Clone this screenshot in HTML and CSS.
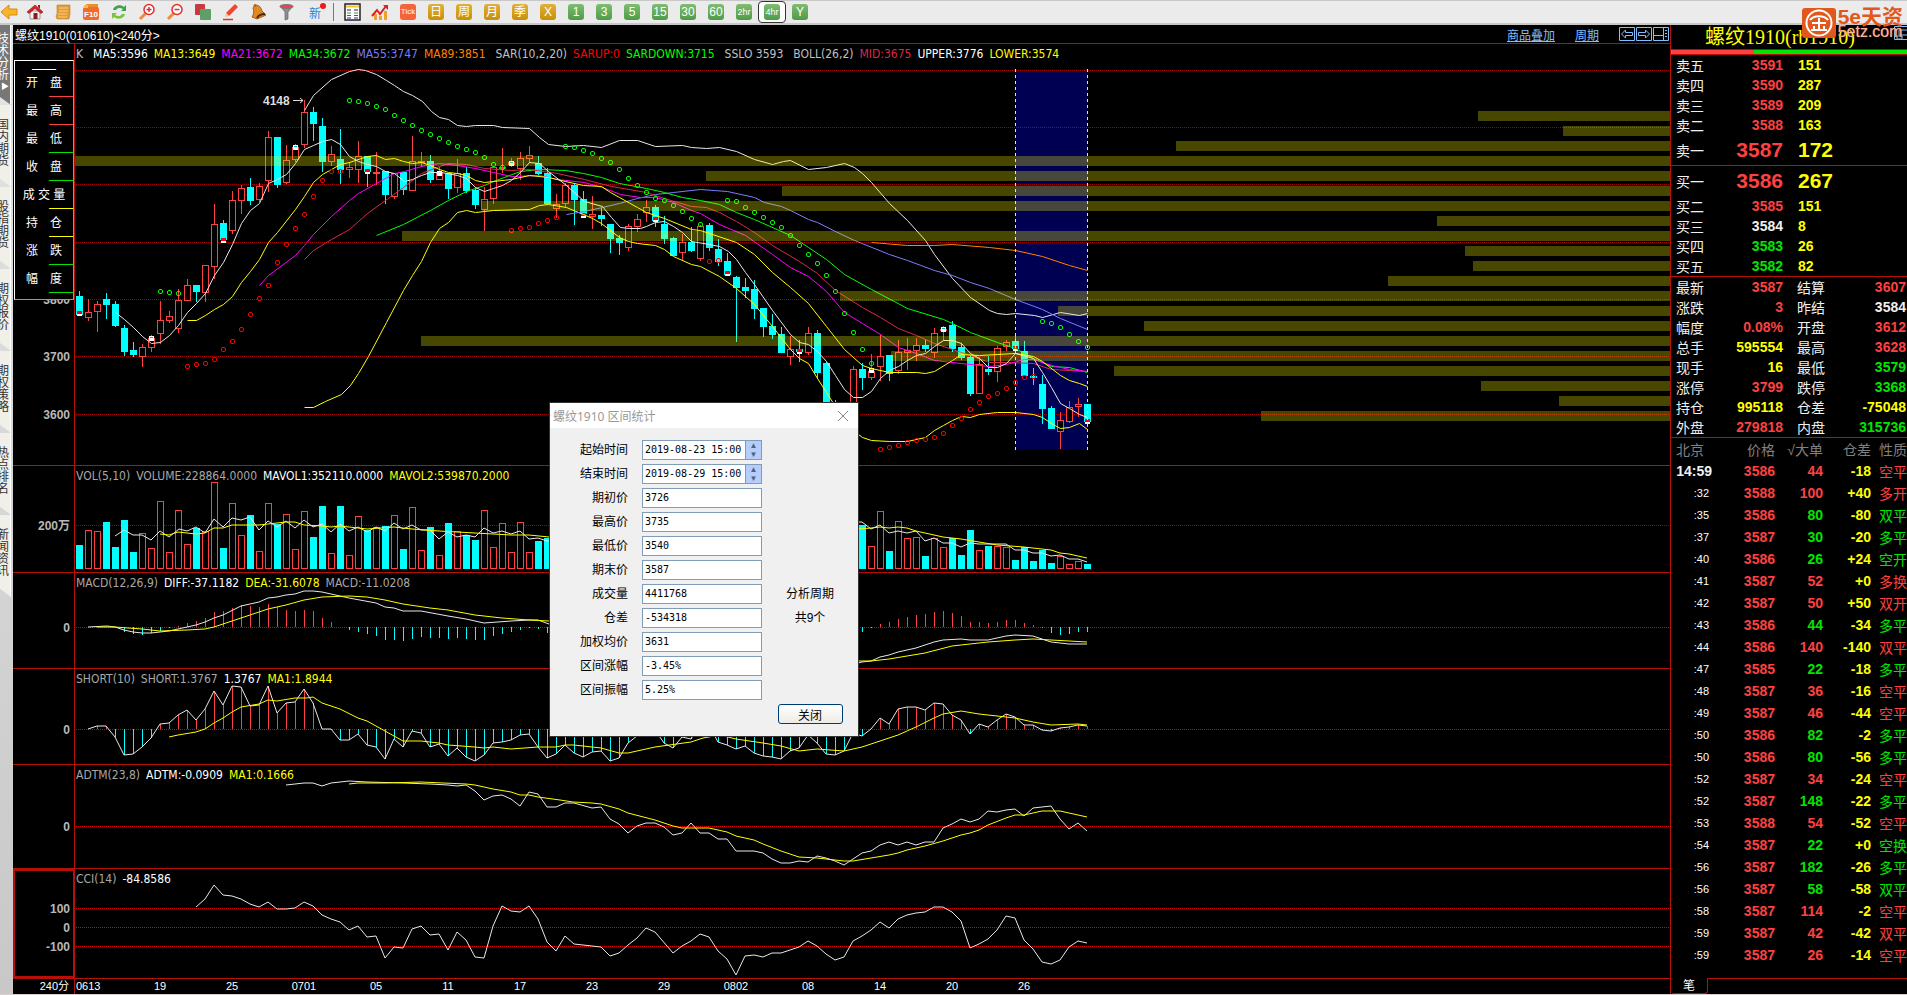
FILE: index.html
```html
<!DOCTYPE html>
<html lang="zh">
<head>
  <meta charset="UTF-8" />
  <meta name="viewport" content="width=device-width, initial-scale=1.0" />
  <title>螺纹1910(010610)</title>
  <link rel="stylesheet" href="styles.css">
</head>
<body>
  <header class="toolbar">
    <button class="tool" aria-label="后退"><svg width="18" height="18"><path d="M1 9L9 2v4h8v6H9v4z" fill="#f7b52c" stroke="#d98a10"/></svg></button>
    <button class="tool" aria-label="首页"><svg width="18" height="18"><path d="M4 8h10v8H4z" fill="#f2f2f2" stroke="#999"/><path d="M1 9L9 2l8 7-2 1.500-6-5-6 5z" fill="#d3222a" stroke="#9c1218" stroke-width=".6"/><path d="M12 2h2v4l-2-2z" fill="#b01820"/><path d="M7.500 10h4v6h-4z" fill="#8a1c1c"/></svg></button>
    <button class="tool" aria-label="资讯"><svg width="18" height="18"><path d="M3 2h13v9l-1 5H3l-1-3 1-2z" fill="#e39b35" stroke="#c67c18" stroke-width=".6"/><path d="M5 5h9M5 8h9M4 11h9M4 14h9" stroke="#f8cf8a"/></svg></button>
    <button class="tool" aria-label="F10"><svg width="18" height="18"><path d="M4 1h12v4H4z" fill="#e8902a"/><rect x="1" y="4" width="16" height="13" rx="2" fill="#f26a2c"/><path d="M2 2h4v3H2z" fill="#f3bb55"/><text x="9" y="14" class="f10">F10</text></svg></button>
    <button class="tool" aria-label="刷新"><svg width="18" height="18"><path d="M3 7c1-5 8-6 11-3l2-2v6h-5l2-2c-3-2-6-1-7 1z" fill="#3fa34d"/><path d="M15 11c-1 5-8 6-11 3l-2 2v-6h5l-2 2c3 2 6 1 7-1z" fill="#7cc242"/></svg></button>
    <button class="tool" aria-label="放大"><svg width="18" height="18"><path d="M2 16l6-6" stroke="#f08a35" stroke-width="3"/><circle cx="11" cy="6.500" r="5" fill="#fff" stroke="#e2312d" stroke-width="1.500"/><path d="M8.500 6.500h5M11 4v5" stroke="#e2312d" stroke-width="1.500"/></svg></button>
    <button class="tool" aria-label="缩小"><svg width="18" height="18"><path d="M2 16l6-6" stroke="#f08a35" stroke-width="3"/><circle cx="11" cy="6.500" r="5" fill="#fff" stroke="#e2312d" stroke-width="1.500"/><path d="M8.500 6.500h5" stroke="#e2312d" stroke-width="1.500"/></svg></button>
    <button class="tool" aria-label="叠加"><svg width="18" height="18"><rect x="1" y="1" width="10" height="11" rx="1" fill="#c9393d"/><rect x="6" y="6" width="11" height="11" rx="1" fill="#5d9f67"/></svg></button>
    <button class="tool" aria-label="画线"><svg width="18" height="18"><path d="M4 10L13 1l3 3-9 9z" fill="#f0452f"/><path d="M4 10l3 3-4 1z" fill="#f5c08a"/><path d="M1 16.500h10" stroke="#e2312d" stroke-width="1.500"/></svg></button>
    <button class="tool" aria-label="预警"><svg width="18" height="18"><path d="M5 2c4 0 6 2 7 6l4 4-9 4-5-2c2-3 2-6 1-9z" fill="#e08a24" stroke="#8a4a10" stroke-width=".8"/><path d="M7 15c2-4 5-4 8-4" stroke="#53280a" stroke-width="2" fill="none"/><circle cx="5" cy="2.500" r="1.500" fill="#b56414"/></svg></button>
    <button class="tool" aria-label="筛选"><svg width="18" height="18"><path d="M2 3h13l-5 6v7l-3 1V9z" fill="#8e8e93" stroke="#55555a" stroke-width=".6"/><ellipse cx="8.500" cy="3.500" rx="6.500" ry="2" fill="#e8454a" stroke="#777"/></svg></button>
    <button class="tool new">新<i></i></button>
    <span class="separator"></span>
    <button class="tool" aria-label="报价表"><svg width="18" height="18"><rect x="2" y="1" width="15" height="16" fill="#fff" stroke="#222" stroke-width="1.500"/><path d="M3 3.500h13" stroke="#f2c230" stroke-width="2"/><path d="M4 7h4M11 7h4" stroke="#222"/><path d="M4 10h4M11 10h4" stroke="#2c9c3c"/><path d="M4 12.500h4M11 12.500h4" stroke="#d22"/><path d="M4 15h4M11 15h4" stroke="#22a"/></svg></button>
    <button class="tool" aria-label="走势图"><svg width="18" height="18"><path d="M3 11v6h3v-6zM8 13v4h3v-4zM13 8v9h3V8z" fill="#f0a02c"/><path d="M1 13l5-6 3 4 6-8" stroke="#e02020" stroke-width="2" fill="none"/><path d="M12 2h5v5z" fill="#e02020"/></svg></button>
    <button class="tool"><span class="badge tick">Tick</span></button>
    <button class="tool"><span class="badge">日</span></button>
    <button class="tool"><span class="badge">周</span></button>
    <button class="tool"><span class="badge">月</span></button>
    <button class="tool"><span class="badge">季</span></button>
    <button class="tool"><span class="badge">X</span></button>
    <button class="tool"><span class="badge green">1</span></button>
    <button class="tool"><span class="badge green">3</span></button>
    <button class="tool"><span class="badge green">5</span></button>
    <button class="tool"><span class="badge green">15</span></button>
    <button class="tool"><span class="badge green">30</span></button>
    <button class="tool"><span class="badge green">60</span></button>
    <button class="tool"><span class="badge green small">2hr</span></button>
    <button class="tool selected"><span class="badge green small">4hr</span></button>
    <button class="tool"><span class="badge green">Y</span></button>
  </header>

  <div class="main">
    <nav class="side-tabs">
      <button class="side-tab active"><span>技术分析</span><b>▶</b></button>
      <button class="side-tab"><span>国内期货</span></button>
      <button class="side-tab"><span>股指期货</span></button>
      <button class="side-tab"><span>期权报价</span></button>
      <button class="side-tab"><span>期权策略</span></button>
      <button class="side-tab"><span>热点排名</span></button>
      <button class="side-tab"><span>新闻资讯</span></button>
    </nav>

    <main class="charts">
      <div class="chart-head">
        <span class="contract">螺纹1910(010610)&lt;240分&gt;</span>
        <a href="#">商品叠加</a>
        <a href="#">周期</a>
        <div class="head-icons">
          <button aria-label="上一个"><svg width="16" height="14"><path d="M.5.5h15v13H.5zM2.500 7l4-4v2.500h7v3h-7V11z"/></svg></button>
          <button aria-label="下一个"><svg width="16" height="14"><path d="M.5.5h15v13H.5zM13.500 7l-4-4v2.500h-7v3h7V11z"/></svg></button>
          <button aria-label="布局"><svg width="16" height="14"><path d="M.5.5h15v13H.5zM10.500.5v13M.5 8.500h10M12 3.500h2M12 6.500h2M12 9.500h2"/></svg></button>
        </div>
      </div>

      <section class="panel panel-k">
        <svg id="k"></svg>
        <div class="title title-k">
          <span class="key">K</span><span>MA5:3596</span><span class="yellow">MA13:3649</span><span class="magenta">MA21:3672</span><span class="lime">MA34:3672</span><span class="violet">MA55:3747</span><span class="orange">MA89:3851</span><span class="silver group">SAR(10,2,20)</span><span class="red">SARUP:0</span><span class="lime">SARDOWN:3715</span><span class="silver group">SSLO 3593</span><span class="silver group">BOLL(26,2)</span><span class="crimson">MID:3675</span><span>UPPER:3776</span><span class="yellow">LOWER:3574</span>
        </div>
        <ul class="info-box">
          <li class="first">——</li>
          <li><span>开　盘</span><i class="up">——</i></li>
          <li><span>最　高</span><i class="up">——</i></li>
          <li><span>最　低</span><i class="down">——</i></li>
          <li><span>收　盘</span><i class="down">——</i></li>
          <li><span>成 交 量</span><i class="yellow">——</i></li>
          <li><span>持　仓</span><i class="yellow">——</i></li>
          <li><span>涨　跌</span><i class="down">——</i></li>
          <li><span>幅　度</span><i class="down">——</i></li>
        </ul>
      </section>
      <section class="panel panel-vol">
        <svg id="vol"></svg>
        <div class="title"><span class="gray">VOL(5,10)</span><span class="gray">VOLUME:228864.0000</span><span>MAVOL1:352110.0000</span><span class="yellow">MAVOL2:539870.2000</span></div>
      </section>
      <section class="panel panel-macd">
        <svg id="macd"></svg>
        <div class="title"><span class="gray">MACD(12,26,9)</span><span>DIFF:-37.1182</span><span class="yellow">DEA:-31.6078</span><span class="gray">MACD:-11.0208</span></div>
      </section>
      <section class="panel panel-short">
        <svg id="short"></svg>
        <div class="title"><span class="gray">SHORT(10)</span><span class="gray">SHORT:1.3767</span><span>1.3767</span><span class="yellow">MA1:1.8944</span></div>
      </section>
      <section class="panel panel-adtm">
        <svg id="adtm"></svg>
        <div class="title"><span class="gray">ADTM(23,8)</span><span>ADTM:-0.0909</span><span class="yellow">MA1:0.1666</span></div>
      </section>
      <section class="panel panel-cci">
        <svg id="cci"></svg>
        <div class="title"><span class="gray">CCI(14)</span><span>-84.8586</span></div>
      </section>
      <div class="time-axis">
        <span class="period">240分</span><span class="start">0613</span><span>19</span><span>25</span><span>0701</span><span>05</span><span>11</span><span>17</span><span>23</span><span>29</span><span>0802</span><span>08</span><span>14</span><span>20</span><span>26</span>
      </div>
    </main>

    <aside class="quote">
      <h1>螺纹1910(rb1910)</h1>
      <div class="ratio"><i></i></div>
      <table class="depth" id="asks"></table>
      <table class="depth" id="bids"></table>
      <table class="stats" id="stats"></table>
      <table class="ticks">
        <thead><tr><th>北京</th><th>价格</th><th>√大单</th><th>仓差</th><th>性质</th></tr></thead>
        <tbody id="ticks"></tbody>
      </table>
      <div class="quote-foot"><button>笔</button></div>
    </aside>
  </div>

  <svg class="dock" width="14" height="14"><path d="M.5.500h13v13H.5zM3 10h5v3H3zM5 4h9v5H5z"/></svg>
  <div class="logo">
    <svg width="34" height="30"><rect width="34" height="30" rx="3" fill="#e2581c"/><circle cx="17" cy="15" r="12.500" fill="none" stroke="#fff" stroke-width="2"/><path d="M8 12c4-5 14-5 18 0M10 15h14M17 10v12M9 22h16M12 18v4M22 18v4" fill="none" stroke="#fff" stroke-width="2"/></svg>
    <div><strong>5e天资</strong><em>5etz.com</em></div>
  </div>

  <form class="dialog" id="dialog">
    <div class="dialog-title"><span>螺纹1910 区间统计</span><button type="button" aria-label="关闭窗口"><svg width="12" height="12"><path d="M1 1l10 10M11 1L1 11"/></svg></button></div>
    <div class="dialog-body">
      <label for="begin">起始时间</label>
      <div class="spin"><input id="begin" value="2019-08-23 15:00"><span><button type="button" aria-label="增加">▲</button><button type="button" aria-label="减少">▼</button></span></div>
      <label for="end">结束时间</label>
      <div class="spin"><input id="end" value="2019-08-29 15:00"><span><button type="button" aria-label="增加">▲</button><button type="button" aria-label="减少">▼</button></span></div>
      <label for="open">期初价</label><input id="open" value="3726">
      <label for="high">最高价</label><input id="high" value="3735">
      <label for="low">最低价</label><input id="low" value="3540">
      <label for="close">期末价</label><input id="close" value="3587">
      <label for="volume">成交量</label><input id="volume" value="4411768"><span class="note">分析周期</span>
      <label for="diff">仓差</label><input id="diff" value="-534318"><span class="note">共9个</span>
      <label for="avg">加权均价</label><input id="avg" value="3631">
      <label for="chg">区间涨幅</label><input id="chg" value="-3.45%">
      <label for="amp">区间振幅</label><input id="amp" value="5.25%">
      <button type="button" class="close">关闭</button>
    </div>
  </form>

  <script src="chart.js"></script>
</body>
</html>
```
FILE: styles.css
```css
*, *::before {
  box-sizing: border-box;
}
body {
  margin: 0;
  height: 100vh;
  display: flex;
  flex-direction: column;
  overflow: hidden;
  background: #d8d0d0;
  color: #fff;
  font-family: 'Liberation Sans', 'Noto Sans CJK SC', sans-serif;
  font-size: 12px;
}
button {
  border: 0;
  padding: 0;
  background: none;
  color: inherit;
  font: inherit;
}
svg {
  display: block;
}

/* 颜色 */
.yellow { color: #ff0; }
.magenta { color: #f0f; }
.lime { color: #0f0; }
.violet { color: #7c7cff; }
.orange { color: #ff8000; }
.silver { color: #c0c0c0; }
.gray { color: #a8a8a8; }
.crimson { color: #dc2848; }
.red { color: #f00; }
.up { color: #ff4040; }
.down { color: #00e600; }
.white { color: #f0f0f0; }

/* 工具栏 */
.toolbar {
  display: flex;
  align-items: center;
  flex: none;
  height: 25px;
  padding-right: 8px;
  background: #ebebeb;
  border-top: 1px solid #c8c8c8;
  border-bottom: 2px solid #c8c8c8;
}
.tool {
  display: flex;
  align-items: center;
  justify-content: center;
  flex: none;
  width: 28px;
  height: 22px;
}
.tool:first-child {
  justify-content: flex-start;
  width: 21px;
}
.tool.selected {
  background: #fff;
  border: 1px solid #333;
  border-radius: 4px;
}
.f10 {
  fill: #fff;
  font-size: 8px;
  font-weight: bold;
  text-anchor: middle;
}
.new {
  position: relative;
  color: #2f7fd6;
  font-size: 12px;
}
.new i {
  position: absolute;
  top: 2px;
  right: 3px;
  width: 6px;
  height: 6px;
  border-radius: 50%;
  background: #f01818;
}
.separator {
  width: 1px;
  height: 18px;
  margin: 0 4px;
  background: #777;
}
.badge {
  width: 16px;
  height: 16px;
  border-radius: 3px;
  background: linear-gradient(#e0b03c, #c88f08);
  color: #fff;
  font-size: 12px;
  line-height: 16px;
  text-align: center;
}
.badge.green {
  background: linear-gradient(#7fbd72, #4f9b45);
}
.badge.tick {
  background: #f4633a;
  font-size: 8px;
}
.badge.small {
  font-size: 9px;
}

.main {
  display: flex;
  flex: 1;
  min-height: 0;
  margin-bottom: 1px;
}

/* 左侧标签 */
.side-tabs {
  flex: none;
  width: 13px;
  overflow: hidden;
  background: linear-gradient(#e4e4e4, #c8c8c8);
}
.side-tab {
  display: flex;
  flex-direction: column;
  justify-content: flex-start;
  width: 11px;
  height: 82px;
  padding-top: 14px;
  background: #f0efe8;
  border-right: 1px solid #fff;
  color: #333;
  font-size: 12px;
  line-height: 12px;
  clip-path: polygon(0 0, 100% 0, 100% 100%, 0 90%);
}
.side-tab span {
  width: 12px;
  margin-left: -3px;
  overflow-wrap: anywhere;
}
.side-tab.active {
  height: 80px;
  padding-top: 8px;
  background: #777;
  color: #fff;
}
.side-tab b {
  font-size: 8px;
}

/* 图表区 */
.charts {
  display: flex;
  flex-direction: column;
  flex: 1;
  min-width: 0;
  background: #000;
}
.chart-head {
  display: flex;
  align-items: center;
  height: 19px;
  padding: 0 1px 0 2px;
  border-bottom: 1px solid #b81008;
}
.contract {
  flex: 1;
}
.chart-head a {
  margin-right: 20px;
  color: #7fbfff;
}
.head-icons {
  display: flex;
  gap: 1px;
}
.head-icons path, .dock path {
  fill: none;
  stroke: #7fbfff;
}
.panel {
  position: relative;
  border-bottom: 1px solid #b81008;
}
.panel svg {
  width: 100%;
  height: 100%;
}
.panel-k { height: 422px; }
.panel-vol { height: 107px; }
.panel-macd { height: 96px; }
.panel-short { height: 96px; }
.panel-adtm { height: 104px; }
.panel-cci { height: 110px; }
.panel-cci::before {
  content: '';
  position: absolute;
  top: 0;
  left: 0;
  width: 62px;
  height: 100%;
  border: 2px solid #b81008;
}
.title {
  position: absolute;
  top: 0;
  left: 63px;
  display: flex;
  gap: 6px;
  font-family: 'DejaVu Sans Condensed', 'DejaVu Sans', sans-serif;
  font-size: 12px;
  line-height: 20px;
  white-space: nowrap;
}
.key {
  margin-right: 4px;
  color: #c0c0c0;
}
.group {
  margin-left: 4px;
}
.info-box {
  position: absolute;
  top: 16px;
  left: 1px;
  width: 60px;
  margin: 0;
  padding: 0;
  list-style: none;
  background: #000;
  border: 1px solid #fff;
  border-right-color: #999;
  border-bottom-color: #999;
}
.info-box li {
  height: 28px;
}
.info-box .first {
  height: 14px;
  text-align: center;
  line-height: 16px;
}
.info-box span {
  display: block;
  text-align: center;
  line-height: 17px;
  white-space: pre;
}
.info-box i {
  display: block;
  font-style: normal;
  line-height: 8px;
  text-align: right;
}

.axis-label {
  fill: #b8b8b8;
  font-size: 12px;
  font-weight: bold;
  text-anchor: end;
}
.peak {
  fill: #ddd;
  font-size: 12px;
  font-weight: bold;
}
.time-axis {
  display: flex;
  flex: 1;
  font-size: 11px;
  line-height: 15px;
  overflow: hidden;
}
.time-axis span {
  width: 72px;
  text-align: center;
}
.time-axis .period {
  width: 62px;
  padding-right: 5px;
  border-right: 1px solid #b81008;
  text-align: right;
}
.time-axis .start {
  width: 49px;
  padding-left: 1px;
  text-align: left;
}

/* 右侧报价 */
.quote {
  display: flex;
  flex-direction: column;
  flex: none;
  width: 237px;
  background: #000;
  border-left: 1px solid #b81008;
  overflow: hidden;
}
.quote h1 {
  height: 24px;
  margin: 0 0 0 34px;
  color: #ff0;
  font-family: 'Liberation Serif', 'Noto Sans CJK SC', serif;
  font-size: 20px;
  font-weight: normal;
  line-height: 24px;
}
.ratio {
  height: 6px;
  padding-left: 1px;
  border: solid #b81008;
  border-width: 1px 0;
  background: #00e600;
}
.ratio i {
  display: block;
  width: 35%;
  height: 4px;
  background: #ff4040;
}
.quote table {
  width: 100%;
  table-layout: fixed;
  border-collapse: collapse;
}
.quote th, .quote td {
  padding: 0;
  white-space: nowrap;
}
.quote th {
  color: #f0f0f0;
  font-size: 14px;
  font-weight: normal;
  text-align: left;
}
.quote td {
  font-size: 14px;
  font-weight: bold;
  text-align: right;
}
.depth, .stats {
  border-bottom: 1px solid #b81008;
}
.depth tr, .stats tr {
  height: 20px;
}
.depth tr.best {
  height: 30px;
}
.depth tr.best td {
  font-size: 21px;
}
.depth th:first-child, .stats th:first-child {
  width: 50px;
  padding-left: 5px;
}
.depth td:nth-child(2), .stats td:nth-child(2) {
  width: 62px;
}
.depth td:last-child {
  padding-left: 15px;
  color: #ff0;
  text-align: left;
}
.stats th:nth-child(3) {
  width: 50px;
  padding-left: 14px;
}
.stats td:last-child {
  padding-right: 1px;
}
.ticks tr {
  height: 22px;
}
.ticks th {
  color: #808080;
  text-align: right;
}
.ticks th:first-child {
  width: 41px;
  padding-left: 5px;
  text-align: left;
}
.ticks th:nth-child(2) { width: 63px; }
.ticks th:nth-child(3) { width: 48px; }
.ticks th:nth-child(4) { width: 48px; }
.ticks th:last-child, .ticks td:last-child {
  padding-left: 8px;
  font-weight: normal;
  text-align: left;
}
.ticks td.sec {
  padding-right: 3px;
  font-size: 11px;
  font-weight: normal;
}
.quote-foot {
  display: flex;
  flex: 1;
  align-items: flex-end;
}
.quote-foot button {
  width: 37px;
  height: 16px;
  border: solid #b81008;
  border-width: 0 1px 1px 0;
  border-radius: 0 0 3px 3px;
  line-height: 14px;
}
.quote-foot::after {
  content: '';
  flex: 1;
  height: 15px;
  border-top: 1px solid #b81008;
}

.dock {
  position: absolute;
  top: 26px;
  right: -1px;
}
.logo {
  position: absolute;
  top: 8px;
  right: 4px;
  display: flex;
  gap: 2px;
  color: #e2581c;
}
.logo strong {
  display: block;
  height: 17px;
  font-size: 21px;
  line-height: 17px;
}
.logo em {
  display: block;
  color: #f0b8a4;
  font-size: 16px;
  font-style: normal;
  line-height: 14px;
  text-shadow: 0 0 1px #e2581c;
}

/* 区间统计 */
.dialog {
  position: absolute;
  top: 402px;
  left: 549px;
  width: 310px;
  background: #f0f0f0;
  border: 1px solid #333;
  color: #000;
}
.dialog-title {
  display: flex;
  align-items: center;
  justify-content: space-between;
  height: 25px;
  padding: 0 9px 0 3px;
  background: #fff;
  color: #999;
  font-family: 'Noto Sans', 'Noto Sans CJK SC', sans-serif;
}
.dialog-title path {
  stroke: #888;
}
.dialog-body {
  display: grid;
  grid-template-columns: 78px 134px 1fr;
  grid-auto-rows: 20px;
  gap: 4px 0;
  padding: 12px 0;
}
.dialog label {
  grid-column: 1;
  line-height: 20px;
  text-align: right;
}
.dialog input {
  width: 120px;
  height: 20px;
  padding: 0 2px 2px;
  background: #fff;
  border: 1px solid #7f9db9;
  color: #000;
  font-family: 'DejaVu Sans Mono', monospace;
  font-size: 10px;
}
.dialog-body > input, .spin {
  grid-column: 2;
  margin-left: 14px;
}
.spin {
  display: flex;
  border: 1px solid #7f9db9;
  background: #b6cdfb;
}
.spin input {
  flex: 1;
  min-width: 0;
  height: 18px;
  border-width: 0 1px 0 0;
  padding-bottom: 1px;
}
.spin span {
  display: flex;
  flex-direction: column;
  width: 15px;
}
.spin button {
  flex: 1;
  color: #4d6185;
  font-size: 8px;
  line-height: 9px;
}
.note {
  grid-column: 3;
  line-height: 20px;
  text-align: center;
}
.dialog .close {
  grid-row: 12;
  grid-column: 3;
  justify-self: center;
  width: 65px;
  border: 1px solid #003c74;
  border-radius: 3px;
  background: linear-gradient(#fff, #ecebe5);
}
```
FILE: chart.js
```js
const RED = '#ff4040', CYAN = '#0ff', WHITE = '#e8e8e8', YELLOW = '#ff0', GREEN = '#0f0';
const LEFT = 13;    // 左侧标签宽度
const AXIS = 74;    // 纵轴位置

// 第 i 根K线的横坐标
const barX = i => 79 + 9 * i;

const rect = (x, y, w, h, fill) => `<rect x="${x}" y="${y}" width="${w}" height="${h}" fill="${fill}"/>`;
const line = (points, color) => `<polyline points="${points}" fill="none" stroke="${color}"/>`;
const grid = (y, color) => `<line x1="${AXIS + 2}" x2="110%" y1="${y}.5" y2="${y}.5" stroke="${color}" stroke-dasharray="1 1"/>`;
const label = (y, text) => `<text class="axis-label" x="70" y="${y + 5}">${text}</text>`;

function box(x, top, bottom, up) {
  const h = Math.max(bottom - top, 2);
  return up
    ? `<rect x="${x - 2.5}" y="${top + 0.5}" width="6" height="${h - 1}" fill="#000" stroke="${RED}"/>`
    : rect(x - 3, top, 7, h, CYAN);
}

function draw(id, top, html) {
  document.getElementById(id).innerHTML =
    `<g transform="translate(${-LEFT} ${-top})">${rect(AXIS, top, 1, 450, '#b81008')}${html}</g>`;
}

// 最高,实体上,实体下,最低,涨跌
const candles = `291,296,315,316,d 299,312,318,321,u 301,304,312,332,u 293,299,305,319,d 301,304,326,327,d
325,328,352,356,d 342,350,355,357,d 344,347,357,367,u 335,338,348,352,u 301,320,334,344,u
311,316,321,323,u 289,300,329,333,u 279,285,301,301,u 285,285,292,302,d 265,265,293,302,u
204,224,267,279,u 220,223,240,243,d 191,200,231,234,u 185,188,201,214,u 178,187,201,205,d
183,186,200,202,u 131,137,181,192,u 137,137,185,188,d 145,160,183,184,u 144,147,160,162,u
100,112,145,148,u 107,112,124,141,d 118,126,162,172,d 146,154,162,166,u 129,159,170,184,d
162,167,170,178,u 141,156,170,183,u 156,156,172,187,d 152,172,174,185,u 171,171,195,204,d
173,173,197,199,u 172,172,190,195,d 136,161,191,191,u 152,161,163,167,u 155,161,180,183,d
167,172,180,180,u 173,173,189,199,d 159,173,188,193,u 167,173,191,193,d 187,190,205,209,d
187,199,210,231,u 167,167,199,204,u 148,167,169,173,u 158,162,165,167,u 152,158,169,180,u
146,155,159,163,u 156,163,174,175,d 168,173,204,204,d 194,204,209,218,u 183,185,204,207,u
183,185,200,225,d 191,199,214,216,d 196,214,217,229,u 208,215,219,226,d 224,224,239,253,d
235,238,243,255,d 224,226,248,251,u 214,219,227,232,u 200,207,213,222,u 205,207,221,227,d
216,224,239,244,d 237,238,256,256,d 234,242,253,261,u 227,242,251,252,d 225,226,259,261,u
223,225,248,251,d 239,249,262,266,d 253,261,275,275,d 276,277,288,342,d 278,287,291,298,d
280,289,309,319,d 308,308,327,337,d 314,326,335,339,d 327,334,353,353,d 336,349,357,365,u
340,349,352,362,d 327,333,353,355,u 330,333,373,379,d 362,363,402,402,d 400,402,430,430,d
410,412,430,435,d 366,369,430,430,u 363,369,378,390,d 354,371,378,380,u 334,356,367,381,u
355,355,374,381,d 340,352,371,374,u 338,350,353,370,u 338,345,351,361,u 339,345,349,352,d
328,333,353,358,u 326,329,331,341,u 321,325,349,352,d 343,347,358,360,d 355,357,394,396,d
357,364,394,394,u 356,369,372,375,d 346,348,372,382,u 340,342,347,351,u 336,341,349,349,d
341,351,376,376,d 368,376,378,385,d 375,384,409,424,d 406,408,429,429,d 412,420,432,449,u
401,407,422,423,u 398,404,407,417,u 404,404,422,427,d`.split(/\s+/).map(s => s.split(','));

const lines = [
  // BOLL 上轨
  ['304,110 313,95 331,79 349,71 358,69 365,70 376,74 386,80 394,85 403,91 412,95 422,101 431,111 439,117 448,119 457,125 466,126 475,125 493,125 502,127 529,128 539,137 548,144 565,146 583,145 601,147 619,140 637,140 655,146 682,145 691,147 706,148 719,147 736,151 754,159 772,164 783,161 790,160 808,169 826,167 844,163 854,167 862,173 871,182 889,203 907,220 925,240 934,254 952,278 970,297 989,310 997,313 1006,314 1015,313 1034,315 1042,317 1060,312 1079,315 1087,313', WHITE],
  // BOLL 下轨
  ['304,407 313,407 325,401 341,394 350,385 358,373 368,356 386,322 403,290 412,275 421,261 430,242 439,228 448,222 457,212 466,210 475,212 484,211 493,210 529,209 539,205 548,204 566,207 583,214 592,218 601,223 619,237 628,241 637,243 655,245 664,249 673,256 691,264 700,266 719,276 736,288 754,304 772,326 790,349 799,358 808,363 817,378 826,392 833,403 843,425 858,434 862,437 871,440 889,441 907,441 925,437 934,430 943,425 952,420 961,416 970,417 979,414 997,412 1015,412 1033,414 1042,417 1051,423 1060,428 1069,427 1079,423 1087,429', YELLOW],
  // MA89
  ['871,242 907,245 934,245 952,244 989,247 1015,250 1042,256 1069,265 1087,270', '#ff8000'],
  // MA55
  ['566,214 584,211 602,207 619,203 637,198 655,194 673,192 700,189 727,191 754,197 764,202 781,206 790,210 808,219 817,222 835,231 854,240 889,254 907,260 934,270 952,275 970,282 989,288 1015,299 1042,309 1060,318 1087,329', '#7c7cff'],
  // MA34
  ['376,235 403,224 430,210 448,200 466,191 484,185 493,181 520,171 539,169 565,170 583,173 601,177 619,183 646,188 664,192 682,197 700,200 719,204 736,212 754,219 790,235 808,247 826,259 844,274 871,289 907,308 943,319 952,323 970,332 997,342 1015,348 1033,358 1051,366 1069,367 1087,372', GREEN],
  // MID
  ['304,259 313,250 331,239 349,229 358,221 367,213 385,200 403,187 421,173 439,166 448,163 466,164 484,168 511,170 529,169 557,173 584,179 611,186 646,192 664,198 691,206 706,207 719,212 736,221 754,232 772,245 799,261 817,273 835,290 862,307 880,317 898,328 916,335 934,343 952,349 970,355 989,362 1006,362 1033,363 1051,369 1069,370 1087,371', '#dc2848'],
  // MA21
  ['259,285 268,275 295,255 304,245 313,234 331,216 349,200 358,193 376,183 394,173 404,171 421,166 439,163 457,165 475,168 493,172 511,176 539,175 557,179 584,182 602,187 620,194 640,197 655,197 673,202 691,210 700,213 719,224 745,235 772,254 790,267 808,276 826,291 844,312 862,323 880,334 898,347 916,353 934,360 961,363 989,366 1006,364 1024,359 1033,359 1051,365 1069,369 1087,371', '#f0f'],
  // MA13
  ['187,320 196,320 205,315 214,309 223,304 232,296 241,282 250,271 259,259 268,242 277,232 295,209 304,196 313,182 322,174 340,164 349,162 367,156 376,155 385,159 394,158 403,161 412,163 421,162 430,165 439,169 448,172 457,173 466,175 475,180 484,182 511,179 529,175 548,177 565,181 583,185 601,186 610,192 619,197 637,207 646,212 664,218 691,229 700,230 736,242 754,254 772,272 790,287 808,303 826,326 844,349 862,365 871,368 889,372 916,372 925,373 934,371 952,360 961,354 979,355 997,354 1015,353 1033,356 1042,361 1060,375 1069,380 1079,383 1087,386', YELLOW],
  // MA5
  ['115,312 124,319 133,327 142,336 151,343 160,342 169,335 178,325 187,312 196,303 205,293 214,275 223,262 232,244 241,223 250,210 259,203 268,183 277,179 286,174 295,163 304,149 313,145 322,141 331,139 340,144 349,156 358,161 367,164 376,166 385,171 394,173 404,181 412,179 421,175 430,172 441,172 457,175 466,178 475,187 484,191 493,188 502,185 511,180 520,172 529,162 539,163 548,171 566,185 575,193 584,201 602,206 611,217 620,227 629,228 640,228 646,226 655,222 664,221 673,226 682,232 691,241 709,244 719,246 728,251 736,259 745,272 754,284 772,310 790,334 799,342 808,344 818,352 826,361 835,375 844,389 853,397 862,397 871,391 880,378 889,370 898,366 907,360 916,355 925,353 934,346 943,340 952,340 961,343 970,353 979,358 988,367 997,367 1006,363 1015,353 1033,358 1042,372 1051,387 1060,403 1069,408 1079,414 1087,417', WHITE],
];

// SAR: 起始K线, 各点
const sar = [
  [9, [291, 292, 293], GREEN],
  [30, [100, 101, 103, 106, 109, 115, 120, 125, 130, 134, 138, 142, 146, 149, 152, 157, 164, 167], GREEN],
  [54, [146, 147, 150, 153, 158, 162, 169, 178, 185, 192, 198, 200, 205, 211, 218, 224], GREEN],
  [72, [200, 201, 207, 212, 217, 222, 227, 235, 245, 254, 263, 275, 291, 313, 332, 349, 363], GREEN],
  [107, [321, 323, 327, 334, 341, 347], GREEN],
  [12, [366, 364, 363, 359, 349, 341, 329, 314, 298, 285, 262, 244, 228, 214, 196, 180, 171, 171], '#f00'],
  [48, [230, 228, 227, 223, 220, 217], '#f00'],
  [70, [261, 260], '#f00'],
  [89, [449, 447, 445, 442, 440, 439, 437, 433, 425, 418, 409, 402, 396, 393, 388, 382, 377, 376], '#f00'],
];

// 分价成交量, 从右向左
const profile = [192, 107, 494, 1595, 964, 888, 1188, 233, 1268, 205, 197, 282, 830, 612, 526, 1249, 779, 556, 189, 111, 409];

const marksLow = [[0, 311], [16, 238], [32, 169], [56, 213], [64, 217], [72, 271], [80, 349], [104, 346], [112, 419]];
const marksHigh = [[8, 336], [24, 145], [40, 171], [48, 161], [88, 368], [96, 327]];

function drawK() {
  let s = rect(1015, 69, 73, 381, '#000052');
  [70, 127, 184, 242, 299, 356, 414].forEach(y => s += grid(y, '#a00000'));
  s += label(299, 3800) + label(356, 3700) + label(414, 3600);
  candles.forEach(([high, top, bottom, low, dir], i) => {
    const up = dir === 'u';
    s += rect(barX(i), high, 1, low - high, up ? RED : CYAN) + box(barX(i), +top, +bottom, up);
  });
  marksLow.forEach(([i, y]) => s += rect(barX(i) - 2, y, 5, 5, '#fff') + rect(barX(i) - 2, y, 5, 3, '#f00'));
  marksHigh.forEach(([i, y]) => s += rect(barX(i) - 2, y, 5, 5, '#fff') + rect(barX(i) - 1, y + 1, 3, 1, '#00b0b0'));
  s += '<g transform="translate(.5 .5)">' + lines.map(l => line(...l)).join('') + '</g>';
  sar.forEach(([start, ys, color]) => ys.forEach((y, n) => {
    s += `<rect x="${barX(start + n) - 1.5}" y="${y - 1.5}" width="4" height="4" rx="1.5" fill="none" stroke="${color}"/>`;
  }));
  // 以右边界为原点
  s += `<svg x="100%" overflow="visible"><g transform="translate(${LEFT} 0)">`;
  profile.forEach((w, n) => s += rect(-w, 111 + 15 * n, w, 10, 'rgba(255,255,0,.28)'));
  s += '</g></svg>';
  [1015, 1087].forEach(x => s += `<path d="M${x}.5 69v381" stroke="#ff0" stroke-dasharray="3 3"/>`);
  s += '<text class="peak" x="263" y="105">4148</text><path d="M293 100.500h10M300 98l3 2.500-3 2.500" fill="none" stroke="#ddd"/>';
  draw('k', 44, s);
}

const volTops = [545, 530, 531, 522, 547, 520, 552, 533, 548, 501, 552, 510, 544, 528, 531, 482, 548, 503, 535, 515, 551, 503, 524, 514, 549, 511, 537, 506, 553, 506, 555, 516, 530, 527, 526, 515, 549, 507, 550, 527, 555, 523, 531, 535, 540, 510, 547, 523, 552, 522, 552, 541, 538,
  540, 545, 530, 548, 535, 550, 528, 541, 546, 532, 550, 538, 547, 530, 551, 535, 546, 528, 550, 536, 522, 545, 530, 548, 534, 520, 546, 531, 515, 528, 519, 512, 530, 518,
  525, 546, 511, 551, 521, 538, 537, 556, 538, 547, 538, 555, 530, 550, 546, 546, 547, 560, 547, 561, 550, 563, 556, 564, 561, 564];

const volUp = { 11: true, 14: true, 7: true };

function drawVol() {
  let s = grid(525, '#a00000') + label(525, '200万');
  volTops.forEach((y, i) => s += box(barX(i), y, 569, volUp[i] || candles[i][4] === 'u'));
  s += line('115,536 124,530 133,535 142,535 151,540 160,531 169,537 179,529 187,531 196,527 205,533 214,519 223,527 232,518 241,520 250,517 259,530 268,521 277,527 286,521 295,528 304,520 313,527 322,524 331,532 340,524 349,531 358,527 367,532 376,527 385,531 394,523 403,529 412,525 421,530 430,530 439,539 448,532 457,537 466,535 475,537 484,528 493,533 502,531 511,534 520,531 529,539 538,538 547,541 700,535 858,522 862,522 871,529 880,525 889,533 898,531 907,533 916,531 925,541 934,538 943,543 952,543 961,547 970,543 979,544 1006,544 1015,550 1024,550 1033,553 1042,553 1051,556 1060,555 1069,559 1078,559 1087,562', WHITE);
  s += line('160,534 169,535 178,532 196,534 205,533 214,528 223,528 232,525 259,525 286,522 295,522 304,525 322,526 331,527 340,526 367,529 394,527 412,529 439,531 475,533 511,535 529,535 549,537 858,529 871,528 880,527 889,528 898,527 907,528 916,531 925,533 943,537 961,539 979,542 997,545 1024,547 1051,550 1060,553 1069,554 1087,558', YELLOW);
  draw('vol', 466, s);
}

// 柱线: 从零轴到 y
function sticks(start, ys, zero) {
  return ys.map((y, n) => y < zero
    ? rect(barX(start + n), y, 1, zero - y, RED)
    : rect(barX(start + n), zero, 1, y - zero, CYAN)).join('');
}

function drawMacd() {
  let s = grid(627, '#e00000') + label(627, 0);
  s += sticks(5, [632, 634, 635, 633, 631, 628, 626, 623, 621, 618, 612, 611, 608, 605, 606, 607, 604, 607, 610, 611, 610, 611, 618, 622, 627, 630, 632, 634, 636, 640, 640, 641, 639, 637, 638, 638, 639, 638, 639, 640, 640, 636, 634, 632, 630, 628, 629, 633], 627);
  s += sticks(87, [632, 628, 624, 622, 619, 617, 615, 614, 612, 611, 613, 616, 622, 622, 623, 622, 620, 620, 623, 625, 628, 633, 635, 634, 632, 632], 627);
  s += line('88,627 107,626 115,627 124,630 133,632 142,633 151,633 169,631 178,629 196,625 205,622 214,618 223,615 241,606 259,602 268,598 277,597 286,595 295,594 304,591 313,591 322,592 349,598 376,603 385,607 394,608 403,611 421,611 448,616 466,619 484,623 511,621 529,620 538,620 549,624 700,650 858,663 862,662 871,661 880,657 889,655 898,652 916,648 925,645 934,642 943,640 961,639 970,640 988,640 1006,636 1015,635 1033,636 1042,639 1051,642 1069,644 1087,644', WHITE);
  s += line('97,627 115,627 142,629 160,631 187,630 205,629 214,627 232,621 250,615 268,609 286,605 304,600 322,597 349,596 367,597 385,600 403,604 430,608 448,610 475,615 502,618 529,620 549,621 700,645 858,661 871,661 889,659 907,656 925,653 952,646 970,644 988,642 1015,640 1033,639 1051,640 1069,641 1087,642', YELLOW);
  draw('macd', 573, s);
}

function drawShort() {
  const ys = [729, 726, 726, 737, 755, 754, 747, 738, 724, 723, 715, 710, 720, 709, 691, 705, 686, 687, 706, 705, 686, 713, 703, 702, 689, 703, 729, 729, 740, 740, 734, 745, 747, 759, 739, 747, 731, 733, 747, 744, 756, 748, 757, 761, 755, 743, 742, 740, 735, 734, 747, 758, 754, 745, 753, 757, 752, 751, 761, 758, 743, 736, 730, 730, 743, 748, 737, 739, 725, 725, 742, 745, 749, 746, 753, 756, 757, 759, 751, 748, 735, 743, 754, 755, 751, 733, 736, 729, 718, 724, 709, 707, 707, 710, 703, 704, 715, 720, 734, 724, 727, 720, 714, 717, 725, 725, 730, 731, 728, 727, 725, 726];
  let s = grid(729, '#e00000') + label(729, 0) + sticks(1, ys, 729);
  s += line(ys.map((y, n) => barX(n + 1) + ',' + y).join(' '), WHITE);
  s += line('169,737 178,735 196,732 205,729 214,723 223,718 232,712 241,707 259,704 268,700 277,701 295,698 307,698 313,697 322,703 340,709 358,718 367,721 376,726 385,731 403,741 421,741 439,743 448,745 475,747 484,748 493,747 511,749 538,747 556,747 565,745 574,745 601,748 619,753 628,753 655,747 691,742 703,738 720,735 736,739 763,743 781,746 799,751 817,749 844,751 862,747 880,741 898,735 916,727 934,718 943,714 961,711 979,714 988,715 1015,718 1033,722 1051,725 1078,724 1087,725', YELLOW);
  draw('short', 669, s);
}

function drawAdtm() {
  let s = grid(826, '#e00000') + label(826, 0);
  s += line('286,785 304,783 313,783 322,786 331,783 349,781 367,782 403,783 430,784 448,785 457,786 466,785 475,791 484,800 493,796 502,795 511,799 520,806 529,792 538,794 547,807 556,807 565,803 574,803 592,808 601,807 610,819 619,824 628,833 637,826 646,823 655,823 664,827 673,835 682,833 691,823 700,833 709,833 718,839 727,839 736,851 754,851 763,853 772,859 781,863 790,863 799,861 808,862 817,856 826,858 835,861 844,865 862,853 871,851 880,845 889,842 898,845 907,842 916,845 925,842 934,842 943,828 952,824 961,819 970,822 979,819 988,811 997,812 1006,810 1015,809 1024,816 1033,808 1051,806 1060,819 1069,829 1078,823 1087,831', WHITE);
  s += line('349,784 358,783 385,783 421,782 466,784 475,785 493,789 511,792 520,795 529,795 538,797 560,800 573,802 592,803 601,804 619,809 628,813 655,820 673,826 682,828 709,828 727,832 736,836 754,840 763,844 781,851 799,857 817,858 844,861 853,861 871,858 889,855 898,853 907,850 925,846 943,841 961,835 970,833 979,830 988,825 1006,818 1015,815 1024,815 1042,811 1060,811 1087,817', YELLOW);
  draw('adtm', 765, s);
}

function drawCci() {
  let s = grid(908, '#e00000') + grid(927, '#e00000') + grid(946, '#e00000');
  s += label(908, 100) + label(927, 0) + label(946, -100);
  s += line('196,907 205,899 214,885 223,895 232,896 241,899 250,904 259,907 268,902 277,909 286,909 295,908 304,902 313,906 322,915 331,919 340,922 349,930 358,926 367,937 376,936 385,958 394,947 403,948 412,929 421,926 430,935 439,934 448,950 457,932 466,940 475,957 484,958 493,926 502,906 511,911 520,912 529,906 538,919 547,942 556,951 565,936 574,944 592,946 601,947 610,956 619,953 628,945 637,938 646,928 655,932 673,953 682,946 691,941 700,934 709,937 718,951 727,959 736,975 745,956 754,955 763,957 772,953 781,953 799,947 808,941 817,946 826,954 835,960 844,957 853,941 862,936 871,930 880,922 889,928 898,919 907,915 916,913 925,912 934,907 943,907 952,912 961,921 970,948 979,944 988,939 997,930 1006,916 1015,918 1024,940 1033,949 1042,962 1051,964 1060,960 1069,947 1078,941 1087,943', WHITE);
  draw('cci', 869, s);
}

// 右侧报价
const COLOR = { r: 'up', g: 'down', w: 'white', y: 'yellow' };
const cell = (text, c) => `<td class="${COLOR[c]}">${text}</td>`;

function drawDepth(id, rows) {
  document.getElementById(id).innerHTML = rows.map(([name, price, qty, c]) =>
    `<tr class="${name[1] === '一' ? 'best' : ''}"><th>${name}</th>${cell(price, c)}<td>${qty}</td></tr>`).join('');
}

drawK();
drawVol();
drawMacd();
drawShort();
drawAdtm();
drawCci();

drawDepth('asks', [['卖五', 3591, 151, 'r'], ['卖四', 3590, 287, 'r'], ['卖三', 3589, 209, 'r'], ['卖二', 3588, 163, 'r'], ['卖一', 3587, 172, 'r']]);
drawDepth('bids', [['买一', 3586, 267, 'r'], ['买二', 3585, 151, 'r'], ['买三', 3584, 8, 'w'], ['买四', 3583, 26, 'g'], ['买五', 3582, 82, 'g']]);

document.getElementById('stats').innerHTML = [
  ['最新', '3587', 'r', '结算', '3607', 'r'],
  ['涨跌', '3', 'r', '昨结', '3584', 'w'],
  ['幅度', '0.08%', 'r', '开盘', '3612', 'r'],
  ['总手', '595554', 'y', '最高', '3628', 'r'],
  ['现手', '16', 'y', '最低', '3579', 'g'],
  ['涨停', '3799', 'r', '跌停', '3368', 'g'],
  ['持仓', '995118', 'y', '仓差', '-75048', 'y'],
  ['外盘', '279818', 'r', '内盘', '315736', 'g'],
].map(r => `<tr><th>${r[0]}</th>${cell(r[1], r[2])}<th>${r[3]}</th>${cell(r[4], r[5])}</tr>`).join('');

document.getElementById('ticks').innerHTML = `14:59 3586 44 -18 空平 r
:32 3588 100 +40 多开 r
:35 3586 80 -80 双平 g
:37 3587 30 -20 多平 g
:40 3586 26 +24 空开 g
:41 3587 52 +0 多换 r
:42 3587 50 +50 双开 r
:43 3586 44 -34 多平 g
:44 3586 140 -140 双平 r
:47 3585 22 -18 多平 g
:48 3587 36 -16 空平 r
:49 3587 46 -44 空平 r
:50 3586 82 -2 多平 g
:50 3586 80 -56 多平 g
:52 3587 34 -24 空平 r
:52 3587 148 -22 多平 g
:53 3588 54 -52 空平 r
:54 3587 22 +0 空换 g
:56 3587 182 -26 多平 g
:56 3587 58 -58 双平 g
:58 3587 114 -2 空平 r
:59 3587 42 -42 双平 r
:59 3587 26 -14 空平 r`.split('\n').map(row => {
  const [time, price, qty, pos, type, c] = row.split(' ');
  const cls = time[0] === ':' ? 'sec' : 'white';
  return `<tr><td class="${cls}">${time}</td>${cell(price, 'r')}${cell(qty, c)}${cell(pos, 'y')}${cell(type, c)}</tr>`;
}).join('');
```
